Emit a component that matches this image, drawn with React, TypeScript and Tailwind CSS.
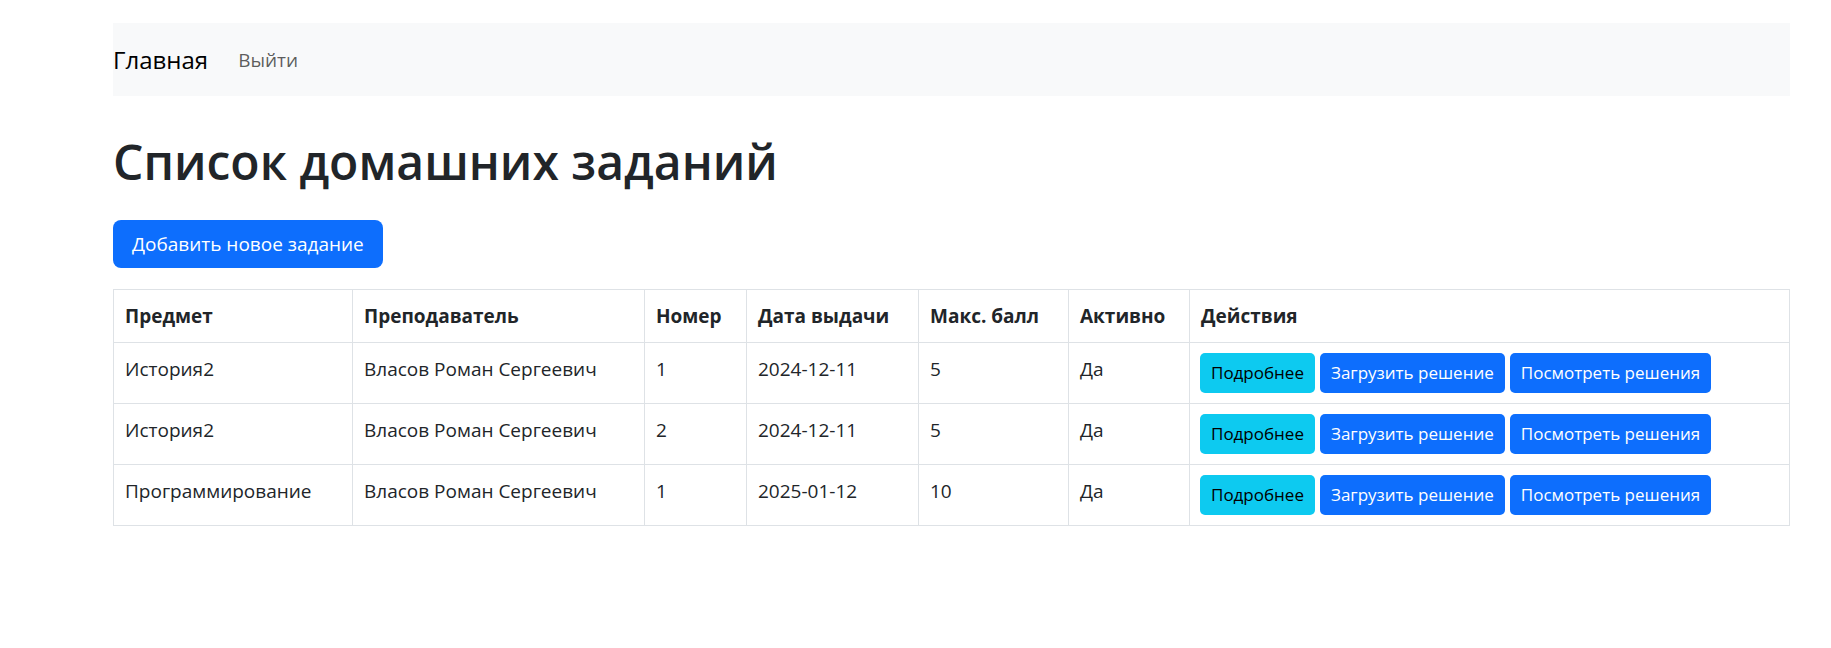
import React from "react";

interface Assignment {
  id: number;
  subject: string;
  teacher: string;
  number: number;
  issued: string;
  maxScore: number;
  active: boolean;
}

const assignments: Assignment[] = [
  { id: 1, subject: "История2", teacher: "Власов Роман Сергеевич", number: 1, issued: "2024-12-11", maxScore: 5, active: true },
  { id: 2, subject: "История2", teacher: "Власов Роман Сергеевич", number: 2, issued: "2024-12-11", maxScore: 5, active: true },
  { id: 3, subject: "Программирование", teacher: "Власов Роман Сергеевич", number: 1, issued: "2025-01-12", maxScore: 10, active: true },
];

const columns = ["Предмет", "Преподаватель", "Номер", "Дата выдачи", "Макс. балл", "Активно", "Действия"];

function Navbar() {
  return (
    <nav className="flex h-[73px] items-center gap-[30px] bg-[#f8f9fa]">
      <a href="#home" className="text-2xl text-black">Главная</a>
      <a href="#logout" className="text-[19px] text-black/65">Выйти</a>
    </nav>
  );
}

function ActionLink({ tone, children }: { tone: "info" | "primary"; children: React.ReactNode }) {
  const color = tone === "info" ? "bg-[#0dcaf0] text-black" : "bg-[#0d6efd] text-white";
  return (
    <a href="#assignment" className={`flex h-10 items-center rounded-[5px] px-[11px] text-[17px] whitespace-nowrap ${color}`}>
      {children}
    </a>
  );
}

function Row({ item }: { item: Assignment }) {
  const cell = "border border-[#dee2e6] px-[11px] py-[10px] align-top";
  return (
    <tr>
      <td className={cell}>{item.subject}</td>
      <td className={cell}>{item.teacher}</td>
      <td className={cell}>{item.number}</td>
      <td className={cell}>{item.issued}</td>
      <td className={cell}>{item.maxScore}</td>
      <td className={cell}>{item.active ? "Да" : "Нет"}</td>
      <td className="border border-[#dee2e6] px-[10px] py-[10px] align-top">
        <div className="flex gap-[5px]">
          <ActionLink tone="info">Подробнее</ActionLink>
          <ActionLink tone="primary">Загрузить решение</ActionLink>
          <ActionLink tone="primary">Посмотреть решения</ActionLink>
        </div>
      </td>
    </tr>
  );
}

export default function App() {
  return (
    <div className="min-h-screen bg-white pt-[23px] pr-[41px] pl-[113px] font-['Open_Sans','Noto_Sans',sans-serif] text-[19px] leading-[32px] text-[#212529]">
      <Navbar />
      <main className="pt-9">
        <h1 className="text-[48px] leading-[60px] font-semibold">Список домашних заданий</h1>
        <a href="#new" className="mt-7 inline-flex h-12 items-center rounded-lg bg-[#0d6efd] px-[19px] text-[19px] text-white">
          Добавить новое задание
        </a>
        <table className="mt-[21px] w-full table-fixed border-collapse text-left">
          <colgroup>
            <col className="w-[239px]" />
            <col className="w-[292px]" />
            <col className="w-[102px]" />
            <col className="w-[172px]" />
            <col className="w-[150px]" />
            <col className="w-[121px]" />
            <col />
          </colgroup>
          <thead>
            <tr>
              {columns.map((title) => (
                <th key={title} scope="col" className="border border-[#dee2e6] px-[11px] py-[10px] font-bold whitespace-nowrap">
                  {title}
                </th>
              ))}
            </tr>
          </thead>
          <tbody>
            {assignments.map((item) => (
              <Row key={item.id} item={item} />
            ))}
          </tbody>
        </table>
      </main>
    </div>
  );
}
